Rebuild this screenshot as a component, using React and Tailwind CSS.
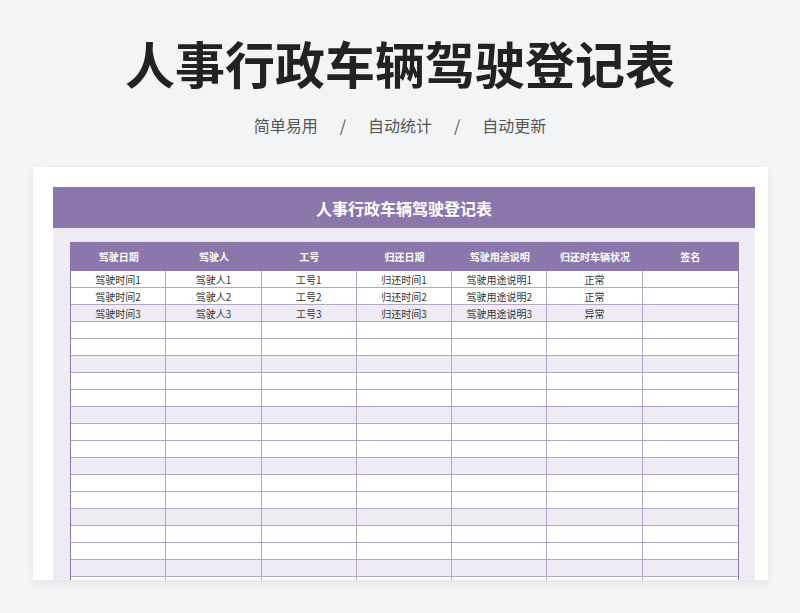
export default function App() {
  const cols = ["驾驶日期", "驾驶人", "工号", "归还日期", "驾驶用途说明", "归还时车辆状况", "签名"];
  const data = [
    ["驾驶时间1", "驾驶人1", "工号1", "归还时间1", "驾驶用途说明1", "正常", ""],
    ["驾驶时间2", "驾驶人2", "工号2", "归还时间2", "驾驶用途说明2", "正常", ""],
    ["驾驶时间3", "驾驶人3", "工号3", "归还时间3", "驾驶用途说明3", "异常", ""],
  ];
  const rows = Array.from({ length: 20 }, (_, i) => data[i] || ["", "", "", "", "", "", ""]);
  return (
    <div className="w-[800px] h-[613px] bg-[#f3f4f6] overflow-hidden flex flex-col items-center" style={{ fontFamily: '"Noto Sans CJK SC", "Noto Sans", sans-serif' }}>
      <h1 className="mt-[29px] h-[66px] leading-[66px] text-[50px] font-bold text-[#222]">人事行政车辆驾驶登记表</h1>
      <div className="mt-[19px] flex gap-[22px] text-[16px] text-[#555] leading-[22px]">
        <span>简单易用</span><span>/</span><span>自动统计</span><span>/</span><span>自动更新</span>
      </div>
      <div className="mt-[31px] w-[735px] h-[413px] bg-white shadow-[0_2px_8px_rgba(0,0,0,0.08)] pl-[20px] pr-[13px] pt-[20px] overflow-hidden self-start ml-[33px]">
        <div className="bg-[#efebf4] h-full">
          <div className="h-[41px] bg-[#8b77ab] text-white flex items-center justify-center text-[16px] font-bold">人事行政车辆驾驶登记表</div>
          <div className="pl-[17px] pr-[16px] pt-[14px]">
            <div className="border-l border-r border-[#8b77ab]">
              <div className="grid grid-cols-7 h-[29px] bg-[#8b77ab] text-white text-[10px] font-bold">
                {cols.map(c => <div key={c} className="flex items-center justify-center">{c}</div>)}
              </div>
              {rows.map((r, i) => (
                <div key={i} className={`grid grid-cols-7 h-[17px] border-b border-[#b3a6c8] ${i % 3 === 2 ? "bg-[#efebf4]" : "bg-white"}`}>
                  {r.map((c, j) => (
                    <div key={j} className={`flex items-center justify-center text-[10px] text-[#333] ${j < 6 ? "border-r border-[#b3a6c8]" : ""}`}>{c}</div>
                  ))}
                </div>
              ))}
            </div>
          </div>
        </div>
      </div>
    </div>
  );
}
